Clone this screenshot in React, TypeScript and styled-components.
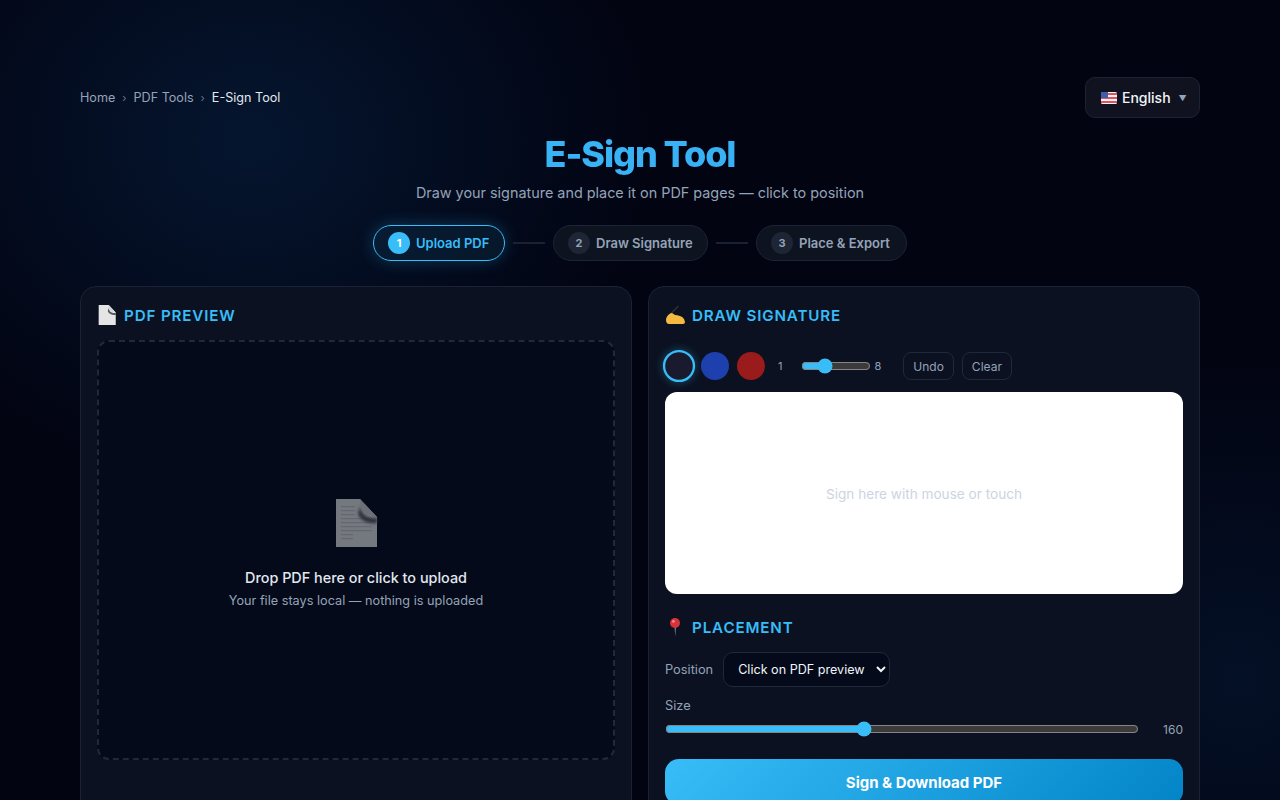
import React from 'react'
import styled, { createGlobalStyle } from 'styled-components'

const GlobalStyle = createGlobalStyle`
  html, body {
    margin: 0;
    padding: 0;
    height: 100%;
    overflow: hidden;
    background: #020412;
  }
  * { box-sizing: border-box; }
  #root { height: 100%; }
`

const Page = styled.div`
  height: 800px;
  overflow: hidden;
  color: #e2e8f0;
  font-family: Inter, 'Liberation Sans', sans-serif;
  background:
    radial-gradient(ellipse 400px 340px at 250px 140px, rgba(14, 72, 130, 0.26), transparent 100%),
    radial-gradient(ellipse 300px 320px at 1240px 680px, rgba(14, 72, 130, 0.18), transparent 100%),
    #020412;
`

const Container = styled.div`
  width: 1120px;
  margin: 0 auto;
  padding-top: 77px;
`

const TopBar = styled.div`
  display: flex;
  justify-content: space-between;
  align-items: center;
  height: 41px;
`

const Crumbs = styled.nav`
  display: flex;
  align-items: center;
  gap: 7px;
  font-size: 12.6px;
  color: #94a3b8;
`

const Sep = styled.span`
  color: #64748b;
  font-size: 11px;
`

const Current = styled.span`
  color: #e2e8f0;
`

const LangButton = styled.button`
  display: flex;
  align-items: center;
  gap: 5px;
  width: 115px;
  height: 41px;
  padding: 0 15px;
  border-radius: 10px;
  border: 1px solid #1c2234;
  background: #10131f;
  color: #f1f5f9;
  font: 500 14px Inter, 'Liberation Sans', sans-serif;

  svg {
    flex: none;
  }
`

const Caret = styled.span`
  margin-left: 3px;
  font-size: 8px;
  color: #94a3b8;
`

const Hero = styled.header`
  text-align: center;
`

const Title = styled.h1`
  margin: 13px 0 0;
  font-size: 36px;
  line-height: 46px;
  font-weight: 800;
  letter-spacing: -1.1px;
  background: linear-gradient(135deg, #38bdf8, #38a8f2);
  -webkit-background-clip: text;
  background-clip: text;
  color: transparent;
`

const Subtitle = styled.p`
  margin: 4px 0 0;
  font-size: 14.4px;
  line-height: 24px;
  color: #94a3b8;
`

const Steps = styled.div`
  display: flex;
  justify-content: center;
  align-items: center;
  gap: 8px;
  margin-top: 20px;
`

const Step = styled.div<{ $active?: boolean; $width: number }>`
  display: flex;
  align-items: center;
  gap: 6px;
  width: ${({ $width }) => $width}px;
  height: 36px;
  padding: 0 14px;
  border-radius: 18px;
  font-size: 13px;
  font-weight: 600;
  white-space: nowrap;
  border: 1px solid ${({ $active }) => ($active ? '#38bdf8' : '#1c2436')};
  background: ${({ $active }) => ($active ? 'rgba(56, 189, 248, 0.08)' : '#0e1320')};
  color: ${({ $active }) => ($active ? '#38bdf8' : '#94a3b8')};
  box-shadow: ${({ $active }) => ($active ? '0 0 16px rgba(56, 189, 248, 0.25)' : 'none')};
`

const StepNum = styled.span<{ $active?: boolean }>`
  display: flex;
  align-items: center;
  justify-content: center;
  width: 22px;
  height: 22px;
  border-radius: 50%;
  font-size: 11px;
  font-weight: 700;
  background: ${({ $active }) => ($active ? '#38bdf8' : '#1e2534')};
  color: ${({ $active }) => ($active ? '#ffffff' : '#94a3b8')};
`

const StepLine = styled.span`
  width: 32px;
  height: 2px;
  background: #1a2132;
`

const Columns = styled.div`
  display: grid;
  grid-template-columns: 1fr 1fr;
  gap: 16px;
  margin-top: 25px;
`

const Card = styled.section`
  height: 700px;
  padding: 16px;
  border-radius: 16px;
  border: 1px solid #1a2336;
  background: #0b1120;
`

const Heading = styled.h2`
  display: flex;
  align-items: center;
  gap: 7px;
  height: 24px;
  margin: 0 0 13px;
  font-size: 15.2px;
  font-weight: 600;
  letter-spacing: 0.85px;
  text-transform: uppercase;
  color: #38bdf8;
`

const DropZone = styled.div`
  display: flex;
  flex-direction: column;
  align-items: center;
  justify-content: center;
  height: 420px;
  padding-top: 10px;
  border: 2px dashed #1e293b;
  border-radius: 12px;
  background: #040a19;
`

const DropIcon = styled.div`
  opacity: 0.5;
  height: 48px;
  margin-bottom: 20px;
`

const DropTitle = styled.div`
  font-size: 14.4px;
  line-height: 22px;
  font-weight: 500;
  color: #e2e8f0;
`

const DropHint = styled.div`
  margin-top: 2px;
  font-size: 12.7px;
  line-height: 20px;
  color: #94a3b8;
`

const Toolbar = styled.div`
  display: flex;
  align-items: center;
  height: 32px;
  margin: 23px 0 10px;
`

const Swatch = styled.span<{ $color: string; $selected?: boolean }>`
  flex: none;
  width: 28px;
  height: 28px;
  margin-right: 8px;
  border-radius: 50%;
  background: ${({ $color }) => $color};
  border: ${({ $selected }) => ($selected ? '2px solid #38bdf8' : 'none')};
  transform: ${({ $selected }) => ($selected ? 'scale(1.15)' : 'none')};
  box-shadow: ${({ $selected }) => ($selected ? '0 0 8px rgba(56, 189, 248, 0.35)' : 'none')};
`

const PenMin = styled.span`
  margin-left: 5px;
  font-size: 11px;
  color: #94a3b8;
`

const PenMax = styled.span`
  font-size: 11px;
  color: #94a3b8;
`

const Range = styled.input`
  display: block;
  margin: 0;
  height: 16px;
  accent-color: #38bdf8;
  color-scheme: dark;
`

const PenRange = styled(Range)`
  width: 70px;
  margin: 0 3px 0 19px;
`

const SizeRange = styled(Range)`
  flex: 1;
  min-width: 0;
`

const ToolButton = styled.button`
  height: 28px;
  padding: 0 9px;
  margin-left: 8px;
  border-radius: 8px;
  border: 1px solid #1e293b;
  background: transparent;
  color: #94a3b8;
  font: 400 12px Inter, 'Liberation Sans', sans-serif;
`

const FirstToolButton = styled(ToolButton)`
  margin-left: 22px;
`

const SignPad = styled.div`
  display: flex;
  align-items: center;
  justify-content: center;
  height: 202px;
  padding-top: 1px;
  margin-bottom: 21px;
  border-radius: 12px;
  background: #ffffff;
  color: #cbd5e1;
  font-size: 13.6px;
`

const FieldRow = styled.div`
  display: flex;
  align-items: center;
  gap: 10px;
`

const Label = styled.label`
  font-size: 12.8px;
  color: #94a3b8;
`

const SizeLabel = styled(Label)`
  display: block;
  margin-top: 11px;
  line-height: 16px;
`

const Select = styled.select`
  width: 167px;
  height: 35px;
  padding: 0 6px 0 10px;
  border-radius: 10px;
  border: 1px solid #1e293b;
  background: #040a19;
  color: #f1f5f9;
  color-scheme: dark;
  font: 400 12.6px Inter, 'Liberation Sans', sans-serif;
`

const SizeRow = styled.div`
  display: flex;
  align-items: center;
  justify-content: space-between;
  gap: 24px;
  height: 16px;
  margin-top: 7px;
`

const SizeValue = styled.span`
  font-size: 12px;
  color: #94a3b8;
`

const Primary = styled.button`
  display: block;
  width: 100%;
  height: 46px;
  margin-top: 22px;
  border: 0;
  border-radius: 14px;
  background: linear-gradient(135deg, #38bdf8, #0284c7);
  color: #ffffff;
  font: 700 15px Inter, 'Liberation Sans', sans-serif;
`

const DocIcon = ({ size, lines }: { size: number; lines?: boolean }) => (
  <svg width={size} height={size} viewBox="0 0 48 48">
    <defs>
      <filter id="fold-shade" x="-50%" y="-50%" width="200%" height="200%">
        <feGaussianBlur stdDeviation="1.8" />
      </filter>
    </defs>
    <path d="M4 0h24l17 18v30H4z" fill="#e4e5e4" />
    {lines &&
      [7, 11, 15, 19, 23, 27, 31, 35, 39].map((y) => (
        <rect key={y} x="9" y={y} width={y < 16 ? 14 : y > 34 ? 12 : 31} height="1.2" fill="#c4c4c7" />
      ))}
    <path d="M28 7c1 8 6 13 17 12v5c-9 1-16-2-19-9z" fill="#55555a" filter="url(#fold-shade)" />
    <path d="M28 0c0 6 1 11 5 14 3 2 7 3 12 4z" fill="#d4d4d6" />
  </svg>
)

const HandIcon = () => (
  <svg width="20" height="18" viewBox="0 0 20 18">
    <path d="M13.5 0L5.5 8" stroke="#30302e" strokeWidth="1.5" />
    <path d="M1 14c0-3 3-7 6-7l3 2c3 0 7 1 9 4l1 3c0 2-2 2-3 2H4c-2 0-3-2-3-4z" fill="#f5b93f" />
  </svg>
)

const PinIcon = () => (
  <svg width="20" height="20" viewBox="0 0 20 20">
    <path d="M9.6 9l.6 10.5.7-10.5z" fill="#9aa0a6" />
    <circle cx="10" cy="6" r="5" fill="#d8333a" />
    <circle cx="8.4" cy="4.4" r="1.4" fill="#f08a8d" />
  </svg>
)

const FlagIcon = () => (
  <svg width="16" height="12" viewBox="0 0 16 12">
    <rect width="16" height="12" rx="1.5" fill="#f3f4f6" />
    <path d="M0 1h16v2H0zM0 5h16v2H0zM0 9h16v2H0z" fill="#e0525e" />
    <rect width="7" height="6" fill="#3f5fa8" />
  </svg>
)

export default function App() {
  return (
    <Page>
      <GlobalStyle />
      <Container>
        <TopBar>
          <Crumbs>
            <span>Home</span>
            <Sep>›</Sep>
            <span>PDF Tools</span>
            <Sep>›</Sep>
            <Current>E-Sign Tool</Current>
          </Crumbs>
          <LangButton>
            <FlagIcon />
            English
            <Caret>▼</Caret>
          </LangButton>
        </TopBar>
        <Hero>
          <Title>E-Sign Tool</Title>
          <Subtitle>Draw your signature and place it on PDF pages — click to position</Subtitle>
        </Hero>
        <Steps>
          <Step $active $width={132}>
            <StepNum $active>1</StepNum>
            Upload PDF
          </Step>
          <StepLine />
          <Step $width={155}>
            <StepNum>2</StepNum>
            Draw Signature
          </Step>
          <StepLine />
          <Step $width={151}>
            <StepNum>3</StepNum>
            Place &amp; Export
          </Step>
        </Steps>
        <Columns>
          <Card>
            <Heading>
              <DocIcon size={20} />
              PDF Preview
            </Heading>
            <DropZone>
              <DropIcon>
                <DocIcon size={48} lines />
              </DropIcon>
              <DropTitle>Drop PDF here or click to upload</DropTitle>
              <DropHint>Your file stays local — nothing is uploaded</DropHint>
            </DropZone>
          </Card>
          <Card>
            <Heading>
              <HandIcon />
              Draw Signature
            </Heading>
            <Toolbar>
              <Swatch $color="#1a1a2e" $selected />
              <Swatch $color="#1e40af" />
              <Swatch $color="#991b1b" />
              <PenMin>1</PenMin>
              <PenRange type="range" min={1} max={8} defaultValue={3} />
              <PenMax>8</PenMax>
              <FirstToolButton>Undo</FirstToolButton>
              <ToolButton>Clear</ToolButton>
            </Toolbar>
            <SignPad>Sign here with mouse or touch</SignPad>
            <Heading>
              <PinIcon />
              Placement
            </Heading>
            <FieldRow>
              <Label>Position</Label>
              <Select defaultValue="click">
                <option value="click">Click on PDF preview</option>
              </Select>
            </FieldRow>
            <SizeLabel>Size</SizeLabel>
            <SizeRow>
              <SizeRange type="range" min={60} max={300} defaultValue={160} />
              <SizeValue>160</SizeValue>
            </SizeRow>
            <Primary>Sign &amp; Download PDF</Primary>
          </Card>
        </Columns>
      </Container>
    </Page>
  )
}
